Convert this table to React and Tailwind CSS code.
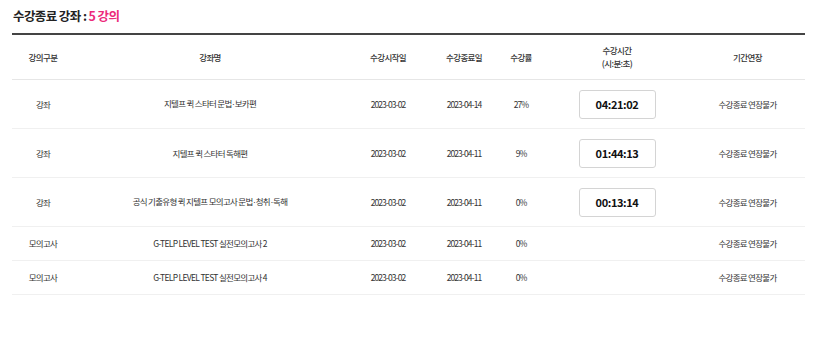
const Dot = () => <span className="font-['Liberation_Sans'] mx-[0.5px]">·</span>;

const rows = [
  { type: "강좌", name: <>지텔프 퀵 스타터 문법<Dot />보카편</>, start: "2023-03-02", end: "2023-04-14", rate: "27%", time: "04:21:02" },
  { type: "강좌", name: "지텔프 퀵 스타터 독해편", start: "2023-03-02", end: "2023-04-11", rate: "9%", time: "01:44:13" },
  { type: "강좌", name: <>공식 기출유형 퀵 지텔프 모의고사 문법<Dot />청취<Dot />독해</>, start: "2023-03-02", end: "2023-04-11", rate: "0%", time: "00:13:14" },
  { type: "모의고사", name: "G-TELP LEVEL TEST 실전모의고사 2", start: "2023-03-02", end: "2023-04-11", rate: "0%", time: null },
  { type: "모의고사", name: "G-TELP LEVEL TEST 실전모의고사 4", start: "2023-03-02", end: "2023-04-11", rate: "0%", time: null },
];

const cols = "grid grid-cols-[62px_272px_84px_68px_46px_146px_115px]";

const App = () => {
  return (
    <div
      className="w-[835px] h-[337px] bg-white text-[#333]"
      style={{ fontFamily: '"Noto Sans CJK KR", "Liberation Sans", sans-serif' }}
    >
      <div className="pl-[12px] pr-[30px] pt-[6px]">
        {/* Title */}
        <h2 className="text-[12.5px] font-bold text-[#222] tracking-[-0.6px] leading-[20px] pl-[1px]">
          수강종료 강좌 : <span className="text-[#ec2a7a]">5 강의</span>
        </h2>

        {/* Table */}
        <div className="mt-[7px] border-t-2 border-[#444]">
          <div className={`${cols} h-[45px] items-center border-b border-[#e6e6e6] text-[8.5px] font-medium text-[#333] tracking-[-0.6px] text-center`}>
            <div>강의구분</div>
            <div>강좌명</div>
            <div>수강시작일</div>
            <div>수강종료일</div>
            <div>수강률</div>
            <div className="leading-[13px]">수강시간<br />(시:분:초)</div>
            <div>기간연장</div>
          </div>

          {rows.map((r, i) => (
            <div
              key={i}
              className={`${cols} ${r.time ? "h-[49px]" : "h-[34px]"} items-center border-b border-[#f0f0f0] text-[8.5px] text-[#333] tracking-[-0.7px] text-center`}
            >
              <div>{r.type}</div>
              <div>{r.name}</div>
              <div className="tracking-[-0.9px]">{r.start}</div>
              <div className="tracking-[-0.9px]">{r.end}</div>
              <div className="tracking-[-0.9px]">{r.rate}</div>
              <div className="flex justify-center">
                {r.time && (
                  <div className="w-[77px] h-[29px] flex items-center justify-center border border-[#d4d4d4] rounded-[3px] text-[11px] font-bold text-[#111] tracking-[-0.4px]">
                    {r.time}
                  </div>
                )}
              </div>
              <div>수강종료 연장불가</div>
            </div>
          ))}
        </div>
      </div>
    </div>
  );
};

export default App;
